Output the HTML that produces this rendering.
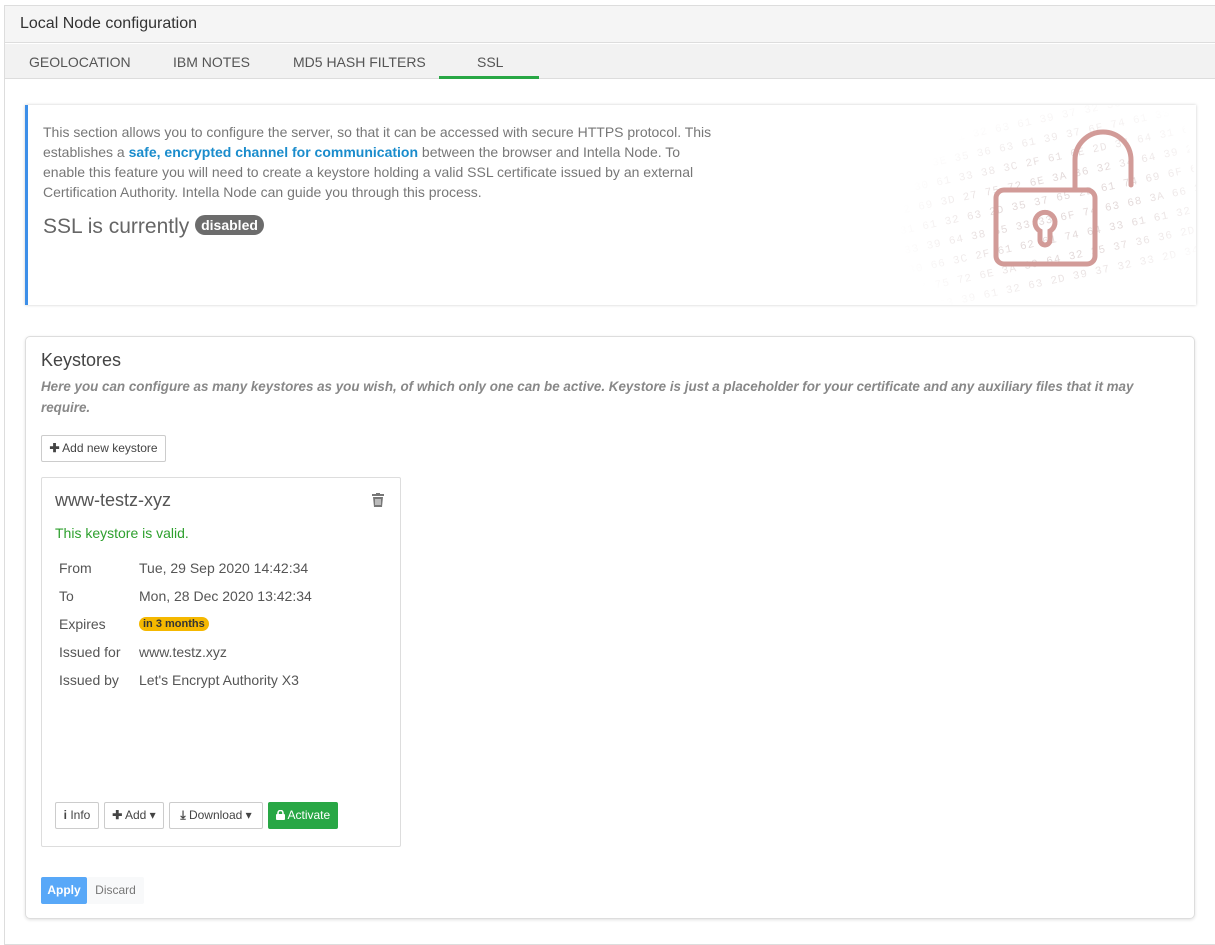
<!DOCTYPE html>
<html><head><meta charset="utf-8"><style>
*{box-sizing:border-box;margin:0;padding:0}
body{width:1215px;height:930px;background:#fff;font-family:"Liberation Sans",sans-serif;position:relative;overflow:hidden;color:#555}
.a{position:absolute}
.outer{left:4px;top:5px;width:1220px;height:940px;border:1px solid #ddd;background:#fff}
.hdr{left:5px;top:6px;width:1215px;height:37px;background:#f5f5f5;border-bottom:1px solid #ddd;font-size:16px;color:#333;padding:9px 0 0 15px}
.tabs{left:5px;top:44px;width:1215px;height:35px;background:#f2f2f2;border-bottom:1px solid #ddd}
.tab{position:absolute;top:10px;font-size:14px;color:#555}
.info{left:25px;top:105px;width:1171px;height:200px;background:#fff;border-left:3px solid #3d8fe8;box-shadow:0 0 3px rgba(0,0,0,.2);overflow:hidden}
.info p{position:absolute;left:15px;top:17px;width:680px;font-size:14px;line-height:20px;color:#777}
.info b{color:#1a8ccc}
.badge{display:inline-block;background:#6c6c6c;color:#fff;font-size:14px;font-weight:bold;border-radius:10px;padding:2px 6px;vertical-align:3px}
.panel{left:25px;top:336px;width:1170px;height:583px;border:1px solid #ddd;border-radius:5px;box-shadow:0 1px 3px rgba(0,0,0,.12)}
.btn{position:absolute;border:1px solid #ccc;border-radius:2px;background:#fff;font-size:12px;color:#444;text-align:center;line-height:24px}
.card{left:41px;top:477px;width:360px;height:370px;border:1px solid #ddd;border-radius:2px}
.row{position:absolute;left:17px;font-size:14px;color:#555}
.row span{position:absolute;left:80px;white-space:nowrap}
.hex{position:absolute;font-family:"Liberation Mono",monospace;font-size:11px;color:#c9b6b6;white-space:nowrap;letter-spacing:1px}
</style></head><body>
<div class="a outer"></div>
<div class="a hdr">Local Node configuration</div>
<div class="a tabs">
<div class="tab" style="left:24px">GEOLOCATION</div>
<div class="tab" style="left:168px">IBM NOTES</div>
<div class="tab" style="left:288px">MD5 HASH FILTERS</div>
<div class="tab" style="left:472px">SSL</div>
<div class="a" style="left:434px;top:32px;width:100px;height:3px;background:#28a745"></div>
</div>
<div class="a info">
<div style="position:absolute;left:870px;top:0;width:300px;height:200px;opacity:.5;transform:rotate(-12deg);-webkit-mask-image:radial-gradient(ellipse at 55% 55%,#000 30%,transparent 72%)">
<div class="hex" style="left:0;top:10px">64 32 31 61 32 63 61 39 37 32 33 37 34 61 65</div>
<div class="hex" style="left:0;top:30px">66 27 3E 35 36 63 61 39 37 6F 74 61 33 68 3A</div>
<div class="hex" style="left:0;top:50px">62 30 61 33 38 3C 2F 61 6E 2D 34 64 31 65 32</div>
<div class="hex" style="left:0;top:70px">72 69 3D 27 75 72 6E 3A 36 32 34 64 39 2D 6E</div>
<div class="hex" style="left:0;top:90px">31 61 32 63 2D 35 37 65 2D 61 74 69 6F 6E 35</div>
<div class="hex" style="left:0;top:110px">33 39 64 38 65 33 33 6F 74 63 68 3A 66 34 32</div>
<div class="hex" style="left:0;top:130px">30 66 3C 2F 61 62 61 74 64 33 61 61 32 32 2D</div>
<div class="hex" style="left:0;top:150px">27 75 72 6E 3A 39 64 32 35 37 36 36 2D 33 38</div>
<div class="hex" style="left:0;top:170px">36 63 39 61 32 63 2D 39 37 32 33 2D 34 36 61</div>
</div>
<p>This section allows you to configure the server, so that it can be accessed with secure HTTPS protocol. This establishes a <b>safe, encrypted channel for communication</b> between the browser and Intella Node. To enable this feature you will need to create a keystore holding a valid SSL certificate issued by an external Certification Authority. Intella Node can guide you through this process.</p>
<div style="position:absolute;left:15px;top:110px;font-size:21px;color:#666">SSL is currently <span class="badge">disabled</span></div>
</div>
<svg class="a" style="left:0;top:0" width="1215" height="930" viewBox="0 0 1215 930">
<g fill="none" stroke="#d29b98" stroke-width="5" stroke-linecap="round">
<rect x="996" y="190" width="99" height="74" rx="8"/>
<path d="M1075 190 V160 A28 28 0 0 1 1131 160 V185"/>
<path d="M1040 231 V240 A5 5 0 0 0 1050 240 V231 A10 10 0 1 0 1040 231 Z"/>
</g>
</svg>
<div class="a panel">
<div style="position:absolute;left:15px;top:13px;font-size:18px;color:#444">Keystores</div>
<div style="position:absolute;left:15px;top:39px;width:1125px;font-size:13.4px;line-height:21px;font-style:italic;font-weight:bold;color:#888">Here you can configure as many keystores as you wish, of which only one can be active. Keystore is just a placeholder for your certificate and any auxiliary files that it may require.</div>
</div>
<div class="btn" style="left:41px;top:435px;width:125px;height:27px"><b>✚</b> Add new keystore</div>
<div class="a card">
<div style="position:absolute;left:13px;top:12px;font-size:18px;color:#555">www-testz-xyz</div>
<svg style="position:absolute;left:330px;top:15px" width="12" height="14" viewBox="0 0 12 14"><rect x="0" y="1" width="12" height="2" fill="#777"/><rect x="4" y="0" width="4" height="2" fill="#777"/><path d="M1 4h10l-1 10H2z" fill="#777"/><path d="M4 6v6M6 6v6M8 6v6" stroke="#fff" stroke-width="1"/></svg>
<div style="position:absolute;left:13px;top:47px;font-size:14px;color:#2ea02e">This keystore is valid.</div>
<div class="row" style="top:82px">From<span>Tue, 29 Sep 2020 14:42:34</span></div>
<div class="row" style="top:110px">To<span>Mon, 28 Dec 2020 13:42:34</span></div>
<div class="row" style="top:138px">Expires<span style="top:1px;background:#f5b800;color:#333;font-size:11px;font-weight:bold;border-radius:8px;padding:1px 4px">in 3 months</span></div>
<div class="row" style="top:166px">Issued for<span>www.testz.xyz</span></div>
<div class="row" style="top:194px">Issued by<span>Let's Encrypt Authority X3</span></div>
</div>
<div class="btn" style="left:55px;top:802px;width:44px;height:27px"><b>i</b> Info</div>
<div class="btn" style="left:104px;top:802px;width:60px;height:27px"><b>✚</b> Add ▾</div>
<div class="btn" style="left:169px;top:802px;width:94px;height:27px"><b>⤓</b> Download ▾</div>
<div class="btn" style="left:268px;top:802px;width:70px;height:27px;background:#28a745;border-color:#28a745;color:#fff"><svg width="9" height="10" viewBox="0 0 9 10" style="vertical-align:-1px"><rect x="0" y="4" width="9" height="6" rx="1" fill="#fff"/><path d="M2 4.5V3a2.5 2.5 0 0 1 5 0v1.5" stroke="#fff" stroke-width="1.6" fill="none"/></svg> Activate</div>
<div class="btn" style="left:41px;top:877px;width:46px;height:27px;background:#58a8f8;border-color:#58a8f8;color:#fff;font-weight:bold">Apply</div>
<div class="btn" style="left:87px;top:877px;width:57px;height:27px;background:#f8f9fa;border-color:#f8f9fa;color:#777">Discard</div>
</body></html>
